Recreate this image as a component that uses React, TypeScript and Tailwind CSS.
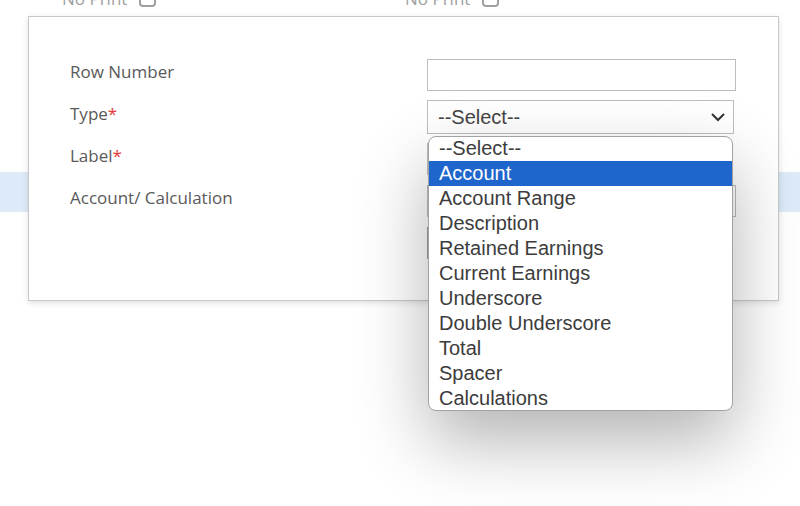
import React from "react";

const options = [
  "--Select--",
  "Account",
  "Account Range",
  "Description",
  "Retained Earnings",
  "Current Earnings",
  "Underscore",
  "Double Underscore",
  "Total",
  "Spacer",
  "Calculations",
];

function NoPrint() {
  return (
    <div className="flex items-center gap-[12px] w-[343px]">
      <span className="text-[17px] leading-[20px] text-[#a0a0a0]">No Print</span>
      <span className="block w-[17px] h-[15px] rounded-[4px] border-2 border-[#a0a0a0] bg-white" />
    </div>
  );
}

function Label({ text, required }: { text: string; required?: boolean }) {
  return (
    <div className="h-[42px] flex items-center text-[17px] text-[#595959]">
      {text}
      {required && <span className="text-[#e53935]">*</span>}
    </div>
  );
}

export default function App() {
  return (
    <div
      className="relative w-[800px] h-[506px] overflow-hidden bg-white"
      style={{ fontFamily: '"Open Sans", "Noto Sans", sans-serif' }}
    >
      {/* page behind the dialog */}
      <div className="flex pl-[62px] -mt-[11px]">
        <NoPrint />
        <NoPrint />
      </div>
      <div className="mt-[163px] h-[40px] bg-[#dcebf7]" />

      {/* dialog */}
      <div className="absolute left-[28px] top-[16px] w-[751px] h-[285px] bg-white border border-[#c9c9c9] shadow-[0_2px_6px_rgba(0,0,0,0.12)] flex">
        <div className="w-[398px] pl-[41px] pt-[34px]">
          <Label text="Row Number" />
          <Label text="Type" required />
          <Label text="Label" required />
          <Label text="Account/ Calculation" />
        </div>
        <div
          className="w-[309px] pt-[42px] flex flex-col"
          style={{ fontFamily: '"Liberation Sans", Arial, sans-serif' }}
        >
          <div className="h-[32px] border border-[#bdbdbd] bg-white" />
          <div className="mt-[9px] h-[34px] w-[307px] border border-[#bdbdbd] bg-white flex items-center justify-between pl-[10px] pr-[7px] text-[20px] text-[#444]">
            <span>--Select--</span>
            <svg width="16" height="10" viewBox="0 0 16 10">
              <polyline points="2,2 8,8 14,2" fill="none" stroke="#333" strokeWidth="2" />
            </svg>
          </div>
          <div className="mt-[9px] h-[32px] w-[290px] border border-[#bdbdbd] bg-white" />
          <div className="mt-[10px] h-[32px] border border-[#bdbdbd] bg-white" />
          <div className="mt-[10px] h-[32px] w-[120px] border border-[#9e9e9e] bg-white" />
        </div>
      </div>

      {/* open select list */}
      <div
        className="absolute left-[428px] top-[136px] w-[305px] h-[275px] bg-white border border-[#a3a3a3] rounded-[8px] overflow-hidden shadow-[0_30px_70px_rgba(0,0,0,0.3)]"
        style={{ fontFamily: '"Liberation Sans", Arial, sans-serif' }}
      >
        <div className="-mt-[1px]">
          {options.map((o, i) => (
            <div
              key={o}
              className={
                i === 1
                  ? "h-[25px] leading-[25px] pl-[10px] text-[20px] bg-[#1f66cc] text-white"
                  : "h-[25px] leading-[25px] pl-[10px] text-[20px] text-[#3c3c3c]"
              }
            >
              {o}
            </div>
          ))}
        </div>
      </div>
    </div>
  );
}
